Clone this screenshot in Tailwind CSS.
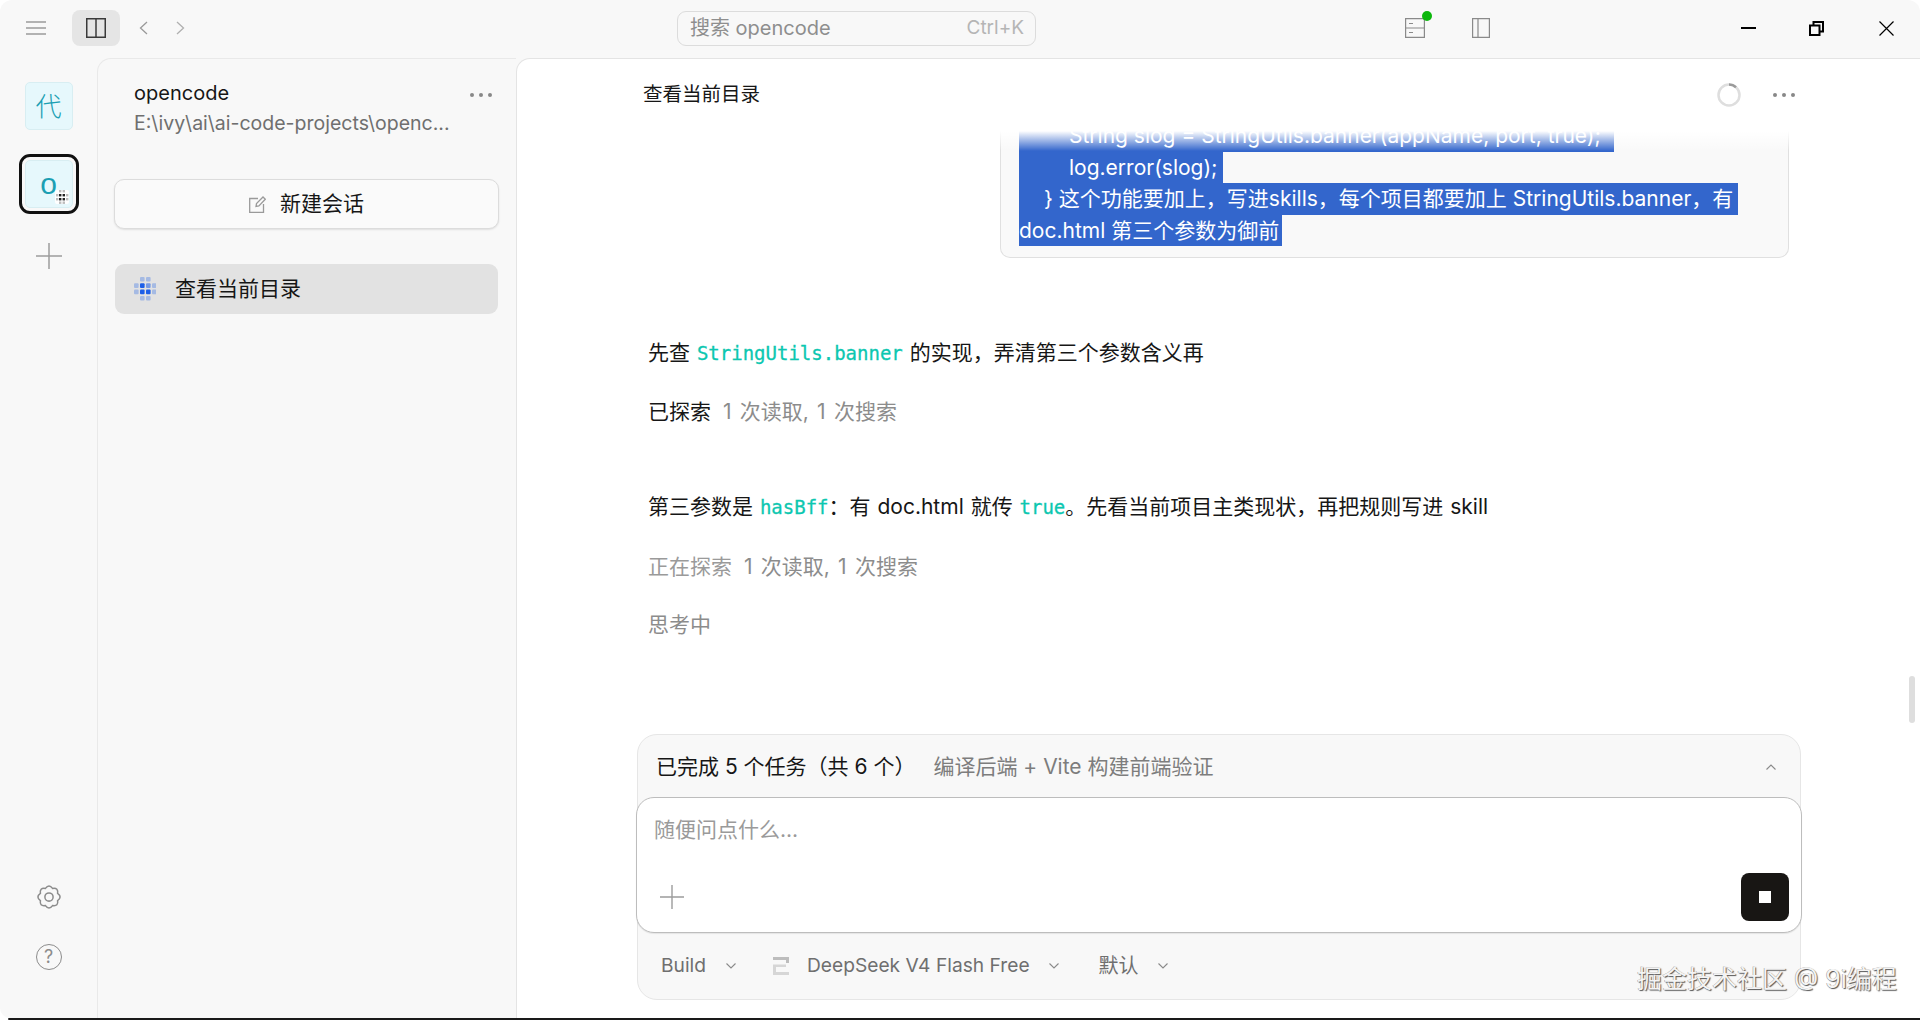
<!DOCTYPE html>
<html lang="zh-CN">
<head>
<meta charset="UTF-8">
<title>opencode</title>
<script src="https://cdn.jsdelivr.net/npm/@tailwindcss/browser@4"></script>
</head>
<body class="bg-white">
<div class="relative w-[1920px] h-[1020px] overflow-hidden font-['Inter','Noto_Sans_CJK_SC',sans-serif] text-[#161616]">
  <div class="flex flex-col h-[1018px] bg-[#f8f8f8] rounded-t-[12px] rounded-b-[10px] overflow-hidden">

    <!-- title bar -->
    <div class="flex items-center h-[58px] pb-[2px] shrink-0">
      <svg class="ml-[26px] w-[20px] h-[14px] text-[#9a9a9a]" viewBox="0 0 20 14" fill="none" stroke="currentColor" stroke-width="1.5"><path d="M0 1h20M0 7h20M0 13h20"/></svg>
      <div class="ml-[26px] w-[48px] h-[36px] rounded-lg bg-[#e5e5e5] flex items-center justify-center">
        <svg class="w-[20px] h-[20px] text-[#3a3a3a]" viewBox="0 0 20 20" fill="none" stroke="currentColor" stroke-width="1.5"><path d="M.75.75h18.5v18.5H.75zM10 .75v18.5"/></svg>
      </div>
      <svg class="ml-[19px] w-[9px] h-[14px] text-[#9a9a9a]" viewBox="0 0 9 14" fill="none" stroke="currentColor" stroke-width="1.3"><path d="M8 1 1.5 7 8 13"/></svg>
      <svg class="ml-[28px] w-[9px] h-[14px] text-[#b0b0b0]" viewBox="0 0 9 14" fill="none" stroke="currentColor" stroke-width="1.3"><path d="M1 1l6.5 6L1 13"/></svg>
      <div class="ml-[492px] w-[359px] h-[35px] rounded-[9px] border border-[#dcdcdc] flex items-center justify-between pl-[12px] pr-[11px]">
        <span class="text-[20px] text-[#8e8e8e]">搜索 opencode</span>
        <span class="text-[19px] text-[#b5b5b5]">Ctrl+K</span>
      </div>
      <div class="relative ml-[369px] w-[20px] h-[20px]">
        <svg class="w-[20px] h-[20px] text-[#8a8a8a]" viewBox="0 0 20 20" fill="none" stroke="currentColor" stroke-width="1.2"><path d="M.6.6h18.8v18.8H.6zM.6 10h18.8M4 5.5h4M4 14.5h4"/></svg>
        <span class="absolute -top-[7px] -right-[7px] w-[10px] h-[10px] rounded-full bg-[#0cb70c]"></span>
      </div>
      <svg class="ml-[47px] w-[18px] h-[20px] text-[#8a8a8a]" viewBox="0 0 18 20" fill="none" stroke="currentColor" stroke-width="1.2"><path d="M.6.6h16.8v18.8H.6zM6 .6v18.8"/></svg>
      <svg class="ml-[251px] w-[15px] h-[2px] text-black" viewBox="0 0 15 2" fill="currentColor"><path d="M0 0h15v2H0z"/></svg>
      <svg class="ml-[53px] w-[15px] h-[15px] text-black" viewBox="0 0 15 15" fill="none" stroke="currentColor" stroke-width="2"><path d="M1 4.5h9.5V14H1zM4.5 4V1H14v9.5h-3"/></svg>
      <svg class="ml-[55px] w-[15px] h-[15px] text-black" viewBox="0 0 15 15" fill="none" stroke="currentColor" stroke-width="1.2"><path d="M.5.5l14 14M14.5.5l-14 14"/></svg>
    </div>

    <div class="flex flex-1 min-h-0">
      <!-- project rail -->
      <div class="w-[97px] shrink-0 flex flex-col items-center pt-[24px] pb-[48px]">
        <div class="w-[48px] h-[48px] rounded-[5px] border border-[#d8eef2] bg-[#e6f8fc] flex items-center justify-center text-[26px] font-light text-[#1b9fb3]">代</div>
        <div class="mt-[24px] w-[60px] h-[60px] rounded-[11px] border-[3px] border-[#111] flex items-center justify-center">
          <div class="relative w-[48px] h-[48px] rounded-[5px] border border-[#d8eef2] bg-[#e6f8fc] flex items-center justify-center font-['Liberation_Sans',sans-serif] text-[30px] leading-none text-[#1b9fb3]">
            o
            <svg class="absolute right-[3px] bottom-[3px] w-[14px] h-[14px] bg-white rounded-[2px]" viewBox="0 0 14 14" fill="#222">
              <g opacity=".3"><rect x="4" y="0" width="2.4" height="2.4"/><rect x="7.6" y="0" width="2.4" height="2.4"/><rect x="1" y="4" width="2.4" height="2.4"/><rect x="11" y="4" width="2.4" height="2.4"/><rect x="1" y="8" width="2.4" height="2.4"/><rect x="11" y="8" width="2.4" height="2.4"/><rect x="4" y="11.5" width="2.4" height="2.4"/><rect x="7.6" y="11.5" width="2.4" height="2.4"/></g>
              <rect x="4" y="4" width="2.4" height="2.4"/><rect x="7.6" y="4" width="2.4" height="2.4"/><rect x="4" y="8" width="2.4" height="2.4"/><rect x="7.6" y="8" width="2.4" height="2.4"/>
            </svg>
          </div>
        </div>
        <svg class="mt-[29px] w-[26px] h-[26px] text-[#9c9c9c]" viewBox="0 0 26 26" fill="none" stroke="currentColor" stroke-width="1.5"><path d="M13 0v26M0 13h26"/></svg>
        <svg class="mt-auto w-[26px] h-[26px] text-[#8c8c8c] overflow-visible" viewBox="0 0 24 24" fill="none" stroke="currentColor" stroke-width="1.4"><path d="M8.7 4.05Q12-.5 15.3 4.05 20.84 3.16 19.95 8.7 24.5 12 19.95 15.3 20.84 20.84 15.3 19.95 12 24.5 8.7 19.95 3.16 20.84 4.05 15.3-.5 12 4.05 8.7 3.16 3.16 8.7 4.05Z"/><circle cx="12" cy="12" r="3.8"/></svg>
        <div class="mt-[34px] w-[26px] h-[26px] rounded-full border-[1.5px] border-[#8c8c8c] flex items-center justify-center text-[18px] leading-none text-[#8c8c8c]">?</div>
      </div>

      <!-- session panel -->
      <div class="w-[419px] shrink-0 rounded-tl-[14px] border-l border-t border-[#e9e9e9] pt-[19px] px-[17px]">
        <div class="flex justify-between pl-[19px] pr-[7px]">
          <div>
            <div class="text-[20px] leading-[30px]">opencode</div>
            <div class="text-[19.5px] leading-[30px] text-[#6f6f6f] whitespace-nowrap">E:\ivy\ai\ai-code-projects\openc...</div>
          </div>
          <div class="flex gap-[5px] mt-[15px]">
            <span class="w-[4px] h-[4px] bg-[#888] rounded-full"></span><span class="w-[4px] h-[4px] bg-[#888] rounded-full"></span><span class="w-[4px] h-[4px] bg-[#888] rounded-full"></span>
          </div>
        </div>
        <div class="mt-[41px] -ml-[1px] h-[50px] w-[385px] rounded-[10px] border border-[#dcdcdc] bg-[#fafafa] shadow-[0_1px_2px_rgba(0,0,0,0.1)] flex items-center justify-center gap-[14px] text-[21px]">
          <svg class="w-[17px] h-[17px] text-[#9a9a9a]" viewBox="0 0 17 17" fill="none" stroke="currentColor" stroke-width="1.3"><path d="M9 2.5H.7v13.8h13.8V8M7 10.5l.5-3L14 1l2.3 2.3-6.4 6.6z"/></svg>
          新建会话
        </div>
        <div class="mt-[35px] h-[50px] w-[383px] rounded-[9px] bg-[#e2e2e2] flex items-center pl-[19px] gap-[19px] text-[21px]">
          <svg class="w-[22px] h-[24px]" viewBox="0 0 22 24" fill="#1d5fe8">
            <g opacity=".3"><rect x="6" y="0" width="4.6" height="4.6" rx="1"/><rect x="12" y="0" width="4.6" height="4.6" rx="1"/><rect x="0" y="6.3" width="4.6" height="4.6" rx="1"/><rect x="18" y="6.3" width="4.6" height="4.6" rx="1"/><rect x="0" y="12.6" width="4.6" height="4.6" rx="1"/><rect x="18" y="12.6" width="4.6" height="4.6" rx="1"/><rect x="6" y="19" width="4.6" height="4.6" rx="1"/><rect x="12" y="19" width="4.6" height="4.6" rx="1"/></g>
            <rect x="6" y="6.3" width="4.6" height="4.6" rx="1"/><rect x="12" y="6.3" width="4.6" height="4.6" rx="1" opacity=".55"/><rect x="6" y="12.6" width="4.6" height="4.6" rx="1"/><rect x="12" y="12.6" width="4.6" height="4.6" rx="1"/>
          </svg>
          查看当前目录
        </div>
      </div>

      <!-- main conversation -->
      <div class="relative flex-1 min-w-0 bg-white border-t border-l border-[#e4e4e4] rounded-tl-[14px] flex flex-col">
        <div class="h-[72px] shrink-0 flex items-center pl-[126px] pr-[125px] text-[19.5px]">
          查看当前目录
          <svg class="ml-auto w-[24px] h-[24px]" viewBox="0 0 24 24" fill="none" stroke-width="2.5"><circle cx="12" cy="12" r="10.5" stroke="#dedede"/><path d="M12 1.5A10.5 10.5 0 0 1 19 4.2" stroke="#9a9a9a"/></svg>
          <div class="ml-[32px] flex gap-[5px]">
            <span class="w-[4px] h-[4px] bg-[#888] rounded-full"></span><span class="w-[4px] h-[4px] bg-[#888] rounded-full"></span><span class="w-[4px] h-[4px] bg-[#888] rounded-full"></span>
          </div>
        </div>

        <div class="relative flex-1 min-h-0 overflow-hidden pl-[131px]">
          <!-- user message, scrolled under the header -->
          <div class="-mt-[15px] ml-[352px] w-[789px] h-[141.5px] rounded-b-[10px] border border-t-0 border-[#e0e0e0] bg-[#f9f9f9] pt-[4px] pl-[18px] text-[21px] leading-[31.5px]">
            <div class="text-white">
              <div class="w-[595px] h-[31.5px] bg-[#3366cc] pl-[50px] whitespace-nowrap">String slog = StringUtils.banner(appName, port, true);</div>
              <div class="w-[204px] h-[31.5px] bg-[#3366cc] pl-[50px] whitespace-nowrap">log.error(slog);</div>
              <div class="w-[719px] h-[31.5px] bg-[#3366cc] pl-[25px] whitespace-nowrap">} 这个功能要加上，写进skills，每个项目都要加上 StringUtils.banner，有</div>
              <div class="w-[263px] h-[31.5px] bg-[#3366cc] whitespace-nowrap">doc.html 第三个参数为御前</div>
            </div>
          </div>
          <div class="absolute top-0 left-0 right-0 h-[20px] bg-gradient-to-b from-white to-white/0"></div>

          <div class="mt-[79px] text-[21px] leading-[32px]">
            <p class="[word-spacing:1px]">先查 <code class="font-['DejaVu_Sans_Mono',monospace] text-[19px] text-[#0cc7b0] [-webkit-text-stroke:0.3px]">StringUtils.banner</code> 的实现，弄清第三个参数含义再</p>
            <p class="mt-[27px]">已探索 <span class="ml-[6px] text-[#8c8c8c] [word-spacing:2.4px]">1 次读取, 1 次搜索</span></p>
            <p class="mt-[63px] [word-spacing:1px]">第三参数是 <code class="font-['DejaVu_Sans_Mono',monospace] text-[19px] text-[#0cc7b0] [-webkit-text-stroke:0.3px]">hasBff</code>：有 doc.html 就传 <code class="font-['DejaVu_Sans_Mono',monospace] text-[19px] text-[#0cc7b0] [-webkit-text-stroke:0.3px]">true</code>。先看当前项目主类现状，再把规则写进 skill</p>
            <p class="mt-[28px] text-[#9a9a9a]">正在探索 <span class="ml-[6px] text-[#8c8c8c] [word-spacing:2.4px]">1 次读取, 1 次搜索</span></p>
            <p class="mt-[26px] text-[#8c8c8c]">思考中</p>
          </div>
        </div>

        <!-- prompt dock -->
        <div class="shrink-0 ml-[120px] mr-[119px] mb-[18px] h-[266px] rounded-[20px] border border-[#e6e6e6] bg-[#f8f8f8] flex flex-col">
          <div class="h-[62px] shrink-0 flex items-center pl-[18px] pr-[24px] pt-[2px] text-[21px]">
            <span>已完成 5 个任务（共 6 个）</span>
            <span class="ml-[18px] text-[#7d7d7d]">编译后端 + Vite 构建前端验证</span>
            <svg class="ml-auto w-[10px] h-[6px] text-[#8a8a8a]" viewBox="0 0 10 6" fill="none" stroke="currentColor" stroke-width="1.1"><path d="M.5 5.5 5 1l4.5 4.5"/></svg>
          </div>
          <div class="-mx-[2px] h-[136px] shrink-0 rounded-[18px] border border-[#bdbdbd] bg-white flex flex-col pt-[18px] pb-[11px] pl-[17px] pr-[12px] shadow-[0_1px_1px_rgba(0,0,0,0.08)]">
            <div class="text-[21px] leading-[28px] text-[#9a9a9a]">随便问点什么...</div>
            <div class="mt-auto flex items-end justify-between">
              <svg class="ml-[6px] mb-[12px] w-[24px] h-[24px] text-[#9c9c9c]" viewBox="0 0 24 24" fill="none" stroke="currentColor" stroke-width="1.4"><path d="M12 0v24M0 12h24"/></svg>
              <div class="w-[48px] h-[48px] rounded-[8px] bg-[#181614] flex items-center justify-center"><span class="w-[12px] h-[12px] bg-white"></span></div>
            </div>
          </div>
          <div class="flex-1 flex items-center pl-[23px] pb-[1px] text-[19.2px] text-[#6f6f6f]">
            <span>Build</span>
            <svg class="ml-[20px] w-[10px] h-[6px] text-[#8a8a8a]" viewBox="0 0 10 6" fill="none" stroke="currentColor" stroke-width="1.1"><path d="M.5.5 5 5 9.5.5"/></svg>
            <svg class="ml-[37px] w-[16px] h-[18px]" viewBox="0 0 16 18"><path fill="#bdbdbd" d="M0 0h16v6h-3V3H0z"/><path fill="#d6d6d6" d="M0 7.5h13V10H3v5h13v3H0z"/></svg>
            <span class="ml-[18px]">DeepSeek V4 Flash Free</span>
            <svg class="ml-[19px] w-[10px] h-[6px] text-[#8a8a8a]" viewBox="0 0 10 6" fill="none" stroke="currentColor" stroke-width="1.1"><path d="M.5.5 5 5 9.5.5"/></svg>
            <span class="ml-[40px] text-[20px]">默认</span>
            <svg class="ml-[19px] w-[10px] h-[6px] text-[#8a8a8a]" viewBox="0 0 10 6" fill="none" stroke="currentColor" stroke-width="1.1"><path d="M.5.5 5 5 9.5.5"/></svg>
          </div>
        </div>

        <!-- scrollbar thumb -->
        <div class="absolute left-[1392px] top-[617px] w-[6px] h-[47px] rounded-full bg-[#dedede]"></div>
      </div>
    </div>
  </div>
  <!-- dark window edge -->
  <div class="ml-[8px] h-[2px] bg-[#1a1a1a] rounded-l-full"></div>
  <!-- site watermark -->
  <div class="absolute left-[1637px] top-[963px] text-[25px] leading-[32px] text-[#f4f4f4] [text-shadow:1px_1px_1px_#555,-0.5px_-0.5px_0.5px_#999]">掘金技术社区 @ 9i编程</div>
</div>
</body>
</html>
